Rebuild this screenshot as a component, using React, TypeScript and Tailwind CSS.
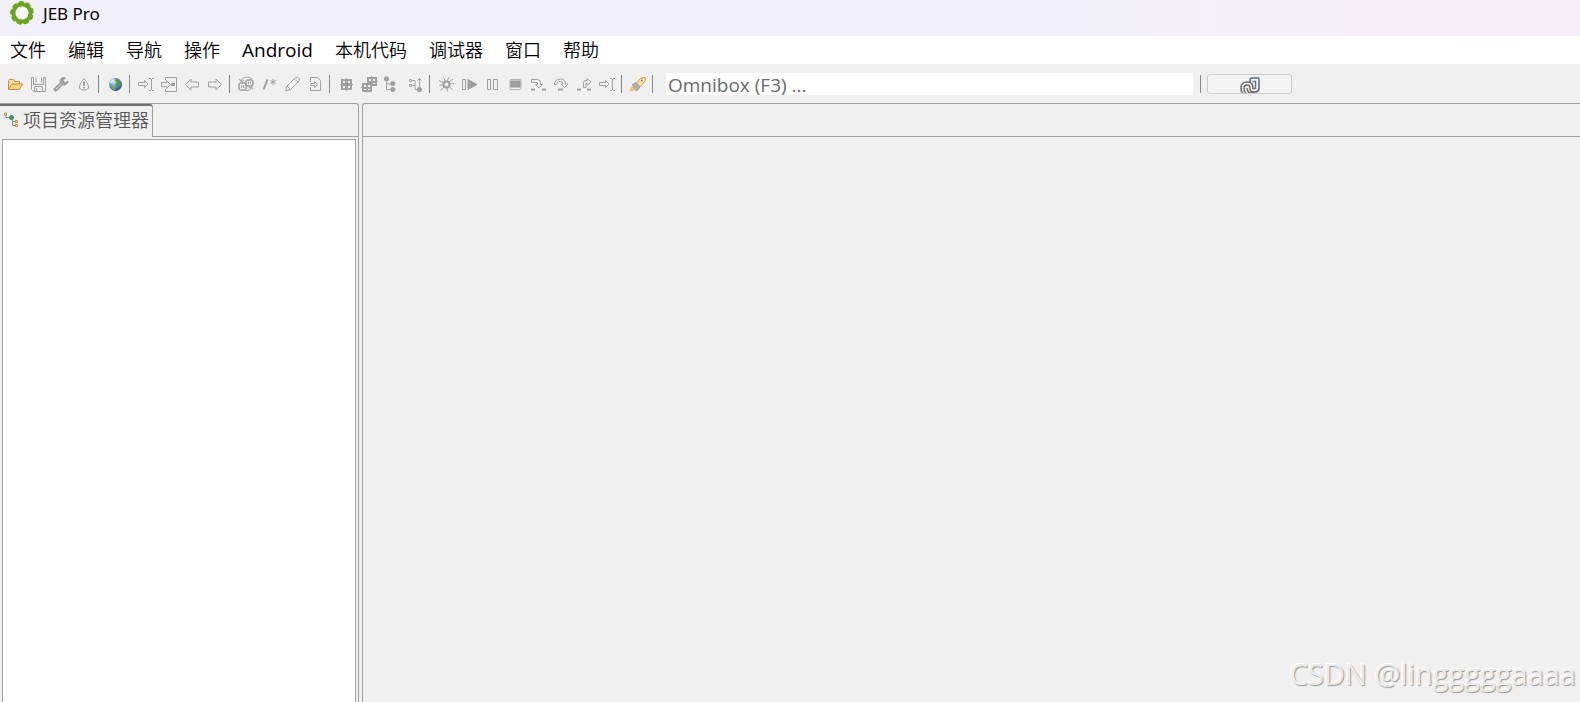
import type { ReactNode } from 'react';

interface ToolItem {
    label: string;
    icon: ReactNode;
}

const MENUS = ['文件', '编辑', '导航', '操作', 'Android', '本机代码', '调试器', '窗口', '帮助'];

const UI_FONT = "font-['Noto_Sans','Noto_Sans_CJK_SC',sans-serif]";

// 16x16 gray toolbar drawing
function Glyph({ children }: { children: ReactNode }) {
    return (
        <svg viewBox="0 0 16 16" className="block size-4 overflow-visible" fill="none" stroke="#a0a0a0" strokeWidth="1" aria-hidden="true">
            {children}
        </svg>
    );
}

const GridCell = ({ x, y }: { x: number; y: number }) => (
    <g transform={`translate(${x} ${y})`} stroke="none">
        <rect x="0" y="0" width="10" height="9" fill="#a0a0a0" />
        <path d="M2 2h2v2H2zM6 2h2v2H6zM2 6h2v1H2zM6 6h2v1H6z" fill="#efefef" />
    </g>
);

const TOOL_GROUPS: ToolItem[][] = [
    [
        {
            label: 'Open',
            icon: (
                <Glyph>
                    <path d="M1.5 13.5v-9l1-1h4l1 2h5v3" fill="#fbe3ae" stroke="#c98a35" />
                    <path d="M1.8 13.5l3-5.5h10.7l-3 5.5z" fill="#fdd68a" stroke="#c98a35" />
                </Glyph>
            ),
        },
        {
            label: 'Save',
            icon: (
                <Glyph>
                    <path d="M1.5 1.5h2v7h10v-7h2v14h-12l-2-2z" />
                    <path d="M4.500 15v-4.500h8V15M6.500 12v3.500M6 1.500v5M11.500 1.500v5" />
                </Glyph>
            ),
        },
        {
            label: 'Options',
            icon: (
                <Glyph>
                    <path d="M10.500 1.500a4 4 0 0 0-3.200 5.300L1.500 12a1.700 1.700 0 0 0 2.500 2.500l5.700-5.700a4 4 0 0 0 5.300-3.800l-2.500 1.500-2-.500-.500-2 2.500-2z" fill="#a0a0a0" stroke="#989898" />
                    <path d="M3 13.200l5.500-5.500" stroke="#dcdcdc" />
                </Glyph>
            ),
        },
        {
            label: 'Notifications',
            icon: (
                <Glyph>
                    <path d="M8 2.500c2 2.500 4.500 6 4.500 8.500 0 2-1.500 3-4.500 3s-4.500-1-4.500-3C3.500 8.500 6 5 8 2.500z" />
                    <path d="M8 5.500v4.500M8 11v1.500" strokeWidth="2" />
                </Glyph>
            ),
        },
    ],
    [
        {
            label: 'Web',
            icon: (
                <svg viewBox="0 0 16 16" className="block size-4" aria-hidden="true">
                    <defs>
                        <radialGradient id="globe" cx="35%" cy="30%" r="75%">
                            <stop offset="0" stopColor="#d5ecfa" />
                            <stop offset="0.45" stopColor="#6a9cc8" />
                            <stop offset="1" stopColor="#234c87" />
                        </radialGradient>
                    </defs>
                    <circle cx="8.500" cy="8.500" r="6.500" fill="url(#globe)" />
                    <path d="M9 2.500l3 1 2 3-.500 3-3 1-2-2 1.500-2-2-2z" fill="#5d9256" />
                    <path d="M4 9l3.500 1 1 2-1.500 2.500-2.500-2z" fill="#79a95a" />
                    <path d="M3 6.500C4 4 6 3 8 3L5 7z" fill="#eaf6fc" opacity="0.800" />
                </svg>
            ),
        },
    ],
    [
        {
            label: 'Go to address',
            icon: (
                <Glyph>
                    <path d="M.5 6.500h6v-2l3.500 3.500-3.500 3.500v-2h-6z" />
                    <path d="M11 2.500h2M14 2.500h2M13.500 3v11M11 14.500h2M14 14.500h2" />
                </Glyph>
            ),
        },
        {
            label: 'Jump to',
            icon: (
                <Glyph>
                    <path d="M4.500 4V1.500h11v14h-11V13" />
                    <path d="M.5 6.500h5v-2l4 4-4 4v-2h-5z" />
                    <path d="M10 8.500h4" strokeWidth="3" />
                </Glyph>
            ),
        },
        { label: 'Back', icon: <Glyph><path d="M1.500 8.500l5.500-5.500v3h7.500v5H7v3z" /></Glyph> },
        { label: 'Forward', icon: <Glyph><path d="M14.500 8.500L9 3v3H1.500v5H9v3z" /></Glyph> },
    ],
    [
        {
            label: 'Refactor',
            icon: (
                <Glyph>
                    <rect x="1" y="7" width="7" height="7" rx="2" strokeWidth="1.500" />
                    <rect x="8" y="4" width="7" height="6" rx="2" strokeWidth="1.500" />
                    <path d="M10.500 5.500v3M12.500 5.500v2M3.500 9.500v2M5.500 9v3" />
                    <path d="M3 5.500C4 1.500 8 .500 11.500 1.500L14 3M14 11c-1 3-4 4-7 3.500M1.500 3l1.500 2.500 3-1M15 13.500l-1.500-2.500-3 1" />
                </Glyph>
            ),
        },
        {
            label: 'Comment',
            icon: (
                <Glyph>
                    <path d="M2.500 13.500l4-10" strokeWidth="2" />
                    <path d="M12 3v6M9.300 4.500l5.400 3M14.700 4.500l-5.400 3" />
                </Glyph>
            ),
        },
        { label: 'Rename', icon: <Glyph><path d="M1.500 15l1.500-5 8.500-8.500 2-.500 2 2-.500 2-8.500 8.500zM3 10l3.500 3.500M10.500 3l3.500 3.500" /></Glyph> },
        {
            label: 'Export',
            icon: (
                <Glyph>
                    <path d="M3.500 6V1.500h7l3 3v10h-10V11" />
                    <path d="M3.500 7.500h4v-2l3.500 3-3.500 3v-2h-4z" />
                </Glyph>
            ),
        },
    ],
    [
        {
            label: 'Table',
            icon: (
                <Glyph>
                    <path d="M3 3h11v11H3z" fill="#a0a0a0" stroke="none" />
                    <path d="M2 8.500h13M8.500 2v13" />
                    <path d="M5 5h2v2H5zM10 5h2v2h-2zM5 10h2v2H5zM10 10h2v2h-2z" fill="#efefef" stroke="none" />
                </Glyph>
            ),
        },
        {
            label: 'Tables',
            icon: (
                <Glyph>
                    <GridCell x={6} y={1} />
                    <GridCell x={1} y={7} />
                    <path d="M15.500 5.500H16.500M10.500 0v2M6 14v2.500M0 11.500h2" />
                </Glyph>
            ),
        },
        {
            label: 'Tree',
            icon: (
                <Glyph>
                    <path d="M2.500 3v10.500H8M2.500 8H8" />
                    <g fill="#a0a0a0" stroke="none">
                        <circle cx="2.500" cy="2.800" r="2.500" />
                        <circle cx="8.800" cy="7.500" r="2.500" />
                        <circle cx="8.800" cy="13.500" r="2.500" />
                    </g>
                </Glyph>
            ),
        },
        {
            label: 'Graph',
            icon: (
                <Glyph>
                    <path d="M2.500 3.500h2v2h-2zM2.500 8.500h2v2h-2zM5 4.500h3v9h3M5 9.500h3M12.500 2.500v10M10.500 4.500l2-2 2 2" />
                    <circle cx="12.500" cy="13.500" r="2.500" fill="#a0a0a0" stroke="none" />
                </Glyph>
            ),
        },
    ],
    [
        {
            label: 'Debug',
            icon: (
                <Glyph>
                    <circle cx="8.500" cy="8.500" r="3" strokeWidth="2" />
                    <path d="M7.500 5.500l-2-4M6 7L1 4.500M5.500 8.500L1 9.500M6 11l-3.500 3.500M9 12l.500 3.500M11.500 11l3.500 3M12 8l4-.500M11 6l4-3M9.500 5.500l1-4" />
                </Glyph>
            ),
        },
        {
            label: 'Run',
            icon: (
                <Glyph>
                    <path d="M1.500 3.500h3v10h-3z" />
                    <path d="M7 3.500l9 5-9 5z" fill="#a0a0a0" />
                </Glyph>
            ),
        },
        { label: 'Pause', icon: <Glyph><path d="M3.500 3.500h3v10h-3zM9.500 3.500h4v10h-4z" /></Glyph> },
        {
            label: 'Stop',
            icon: (
                <Glyph>
                    <rect x="3" y="3.500" width="11" height="10" rx="1" stroke="#b4b4b4" />
                    <rect x="4" y="5" width="9" height="6" fill="#a0a0a0" stroke="#989898" />
                </Glyph>
            ),
        },
        {
            label: 'Step into',
            icon: (
                <Glyph>
                    <path d="M1.500 3.500h6q3 0 3 3v2h2l-3.500 3.500-3.500-3.500h2v-2h-6z" />
                    <path d="M1 13.500h4M12 13.500h4" strokeWidth="2" />
                </Glyph>
            ),
        },
        {
            label: 'Step over',
            icon: (
                <Glyph>
                    <path d="M1.500 8.500V7q1-4 6-4t5 5h2.500l-3.500 3.500L8 8h2q0-2.500-3-2.500T3.500 8.500z" />
                    <path d="M5 13.500h5" strokeWidth="2" />
                </Glyph>
            ),
        },
        {
            label: 'Step out',
            icon: (
                <Glyph>
                    <path d="M7.500 11.500v-5q0-2 2.500-2h1v-2l4 3.500-4 3.500v-2h-1v4z" />
                    <path d="M1 13.500h4M11 13.500h4" strokeWidth="2" />
                </Glyph>
            ),
        },
        {
            label: 'Run to line',
            icon: (
                <Glyph>
                    <path d="M.5 6.500h6v-2l3.500 3.500-3.500 3.500v-2h-6z" />
                    <path d="M11 2.500h2M14 2.500h2M13.500 3v11M11 14.500h2M14 14.500h2" />
                </Glyph>
            ),
        },
    ],
    [
        {
            label: 'Launch',
            icon: (
                <Glyph>
                    <path d="M6 7.500l5-5.500 4-.500.500 3-5.500 6.500z" fill="#fce4a5" stroke="#e39a38" />
                    <path d="M2.500 8.500L6 6.500l4 4-2 3.500-2.500.500z" fill="#b3b1b6" stroke="#a09ea4" />
                    <path d="M2.500 10.500L0 15l5-1.500z" fill="#ffd56b" stroke="#f0b34f" />
                    <circle cx="12" cy="4.500" r="1" fill="#6f7fa8" stroke="none" />
                </Glyph>
            ),
        },
    ],
];

function Separator() {
    return <div className="h-[18px] w-px shrink-0 bg-[#868686]" />;
}

const PETALS = [0, 40, 80, 120, 160, 200, 240, 280, 320];

function Logo() {
    return (
        <svg viewBox="0 0 24 24" className="block size-6" fill="#6aa622" aria-hidden="true">
            <circle cx="12" cy="12" r="8.700" fill="#fbfcf8" stroke="#6aa622" strokeWidth="3" />
            {PETALS.map((deg) => (
                <g key={deg} transform={`rotate(${deg} 12 12)`}>
                    <path d="M8.500 1q2-1.500 5-.500l2 2.500 2 4.500-5-2.500-5 1z" />
                </g>
            ))}
        </svg>
    );
}

function TreeIcon() {
    return (
        <svg viewBox="0 0 16 16" className="block size-4 shrink-0" fill="none" aria-hidden="true">
            <path d="M2 2.500v3h5M8.500 6v7.500H12M8.500 9.500H12" stroke="#7c8798" />
            <path d="M.500 1h2v2h-2zM11.500 8.500h2v2h-2zM11.500 12.500h2v2h-2z" fill="#f5e6a0" stroke="#b49a3c" />
            <circle cx="7.500" cy="5.500" r="2.500" fill="#3c9a5f" />
        </svg>
    );
}

export default function App() {
    return (
        <div className={`flex h-screen flex-col overflow-hidden bg-[#f0f0f0] text-black ${UI_FONT}`}>
            <header className="flex h-9 shrink-0 items-start bg-linear-to-r from-[#f2f1f9] from-60% to-[#f6f0f6] pl-[10px]">
                <div className="flex h-7 items-start gap-[9px] pt-px">
                    <Logo />
                    <h1 className="text-[17px] leading-[26px]">JEB Pro</h1>
                </div>
            </header>

            <nav className="flex h-7 shrink-0 items-center gap-[22px] bg-white pl-[10px]">
                {MENUS.map((menu) => (
                    <button
                        key={menu}
                        className={
                            menu === 'Android'
                                ? "font-['Open_Sans',sans-serif] text-[19px] leading-7 font-normal"
                                : 'text-[18px] leading-7 font-[350]'
                        }
                    >
                        {menu}
                    </button>
                ))}
            </nav>

            <div role="toolbar" className="flex h-[39px] shrink-0 items-center pt-px pl-[7px]">
                {TOOL_GROUPS.map((group) => (
                    <div key={group[0].label} className="mr-2 flex shrink-0 items-center gap-1.5">
                        <div className="flex gap-[7px]">
                            {group.map((tool) => (
                                <button key={tool.label} aria-label={tool.label} className="size-4">
                                    {tool.icon}
                                </button>
                            ))}
                        </div>
                        <Separator />
                    </div>
                ))}
                <input
                    aria-label="Omnibox"
                    placeholder="Omnibox (F3) ..."
                    className="mr-[7px] ml-[5px] h-[22px] max-w-[527px] min-w-0 flex-1 bg-white px-0.5 pt-0.5 font-['Open_Sans',sans-serif] text-[19px] leading-5 outline-none placeholder:text-[#6b6b6b]"
                />
                <Separator />
                <button
                    aria-label="Assistant"
                    className="ml-1.5 flex h-5 w-[85px] shrink-0 items-end justify-center overflow-hidden rounded-[3px] border border-[#cccccc] bg-[#f3f3f3]"
                >
                    <svg viewBox="0 0 20 16" className="h-4 w-5 shrink-0" fill="none" strokeWidth="1.500" aria-hidden="true">
                        <path d="M10 5V3q0-2 2-2h6q1 0 1 1v10q-1 3-4 3h-4" stroke="#5d6475" />
                        <path d="M12.500 4.500h3V10q0 2-2 2" stroke="#6a7488" />
                        <path d="M2.500 16Q1 14 1 11q0-6 6-6t6 6v1M5.500 16Q4 14 4 11.500 4 8 7 8" stroke="#666666" />
                        <path d="M7 8q3 0 3 3v1.500q1 3 4 2.500M7 11v1q1 4 4 4" stroke="#80705f" />
                    </svg>
                </button>
            </div>

            <main className="flex min-h-0 flex-1 gap-[3px]">
                <aside className="flex w-[359px] shrink-0 flex-col rounded-tr-[3px] border-t border-r border-[#a0a0a0]">
                    <div className="flex h-[33px] shrink-0">
                        <button
                            role="tab"
                            aria-selected="true"
                            className="flex items-start gap-[3px] rounded-tr-[3px] border-t-2 border-r border-t-[#707070] border-r-[#a0a0a0] pr-[3px] pl-1 text-[18px] leading-7 font-[350] text-[#555555]"
                        >
                            <span className="pt-1.5">
                                <TreeIcon />
                            </span>
                            项目资源管理器
                        </button>
                        <div className="flex-1 border-b border-[#a0a0a0]" />
                    </div>
                    <div className="mt-0.5 mr-0.5 ml-0.5 flex-1 border-t border-r border-l border-[#a5a5ab] bg-white" />
                </aside>

                <section className="relative flex min-w-0 flex-1 flex-col rounded-tl-[3px] border-t border-l border-[#a0a0a0]">
                    <div className="h-[33px] shrink-0 border-b border-[#a0a0a0]" />
                    <p className="absolute right-1 bottom-2 font-['Open_Sans',sans-serif] text-[29px] leading-10 text-[#ebebeb] [text-shadow:1px_1px_1px_#999999,-1px_-1px_1px_#ffffff]">
                        CSDN @lingggggaaaa
                    </p>
                </section>
            </main>
        </div>
    );
}
